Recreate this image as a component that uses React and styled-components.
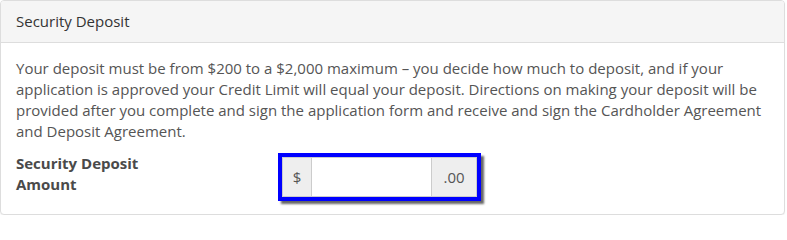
import React from 'react'
import styled, { createGlobalStyle } from 'styled-components'

const GlobalStyle = createGlobalStyle`
	body {
		margin: 0;
		background: #fff;
		font-family: "Open Sans", "Liberation Sans", sans-serif;
		font-size: 15px;
		line-height: 21px;
		color: #555;
	}
	* {
		box-sizing: border-box;
	}
`

const Panel = styled.div`
	width: 785px;
	border: 1px solid #ddd;
	border-radius: 4px;
	box-shadow: 0 1px 1px rgba(0, 0, 0, 0.05);
	background: #fff;
`

const PanelHeading = styled.div`
	padding: 10px 15px;
	background: #f5f5f5;
	border-bottom: 1px solid #ddd;
	border-radius: 3px 3px 0 0;
	color: #333;
`

const PanelBody = styled.div`
	padding: 15px 15px 17px;
`

const Intro = styled.p`
	margin: 0 0 10px;
`

const FormRow = styled.div`
	display: grid;
	grid-template-columns: 266px auto;
	align-items: start;
`

const Label = styled.label`
	font-weight: 700;
	max-width: 140px;
	padding-top: 1px;
	color: #4a4a4a;
`

// annotation box drawn round the amount field
const Highlight = styled.div`
	justify-self: start;
	margin-top: 5px;
	box-shadow: 0 0 0 4px #0000ff, 3px 3px 2px 4px rgba(0, 0, 0, 0.6);
`

const InputGroup = styled.div`
	display: flex;
	height: 40px;
`

const Addon = styled.span`
	display: flex;
	align-items: center;
	justify-content: center;
	width: ${({ width }) => width}px;
	background: #eee;
	border: 1px solid #ccc;
	${({ left }) => (left ? 'border-right: 0;' : 'border-left: 0;')}
	color: #555;
`

const Input = styled.input`
	width: 121px;
	border: 1px solid #ccc;
	background: #fff;
	font: inherit;
	padding: 6px 12px;
	outline: none;
`

const App = () => (
	<>
		<GlobalStyle />
		<Panel>
			<PanelHeading>Security Deposit</PanelHeading>
			<PanelBody>
				<Intro>
					Your deposit must be from $200 to a $2,000 maximum – you decide how much to deposit, and if your
					application is approved your Credit Limit will equal your deposit. Directions on making your deposit
					will be provided after you complete and sign the application form and receive and sign the
					Cardholder Agreement and Deposit Agreement.
				</Intro>
				<FormRow>
					<Label htmlFor="deposit">Security Deposit Amount</Label>
					<Highlight>
						<InputGroup>
							<Addon left width={29}>$</Addon>
							<Input id="deposit" type="text" />
							<Addon width={45}>.00</Addon>
						</InputGroup>
					</Highlight>
				</FormRow>
			</PanelBody>
		</Panel>
	</>
)

export default App
